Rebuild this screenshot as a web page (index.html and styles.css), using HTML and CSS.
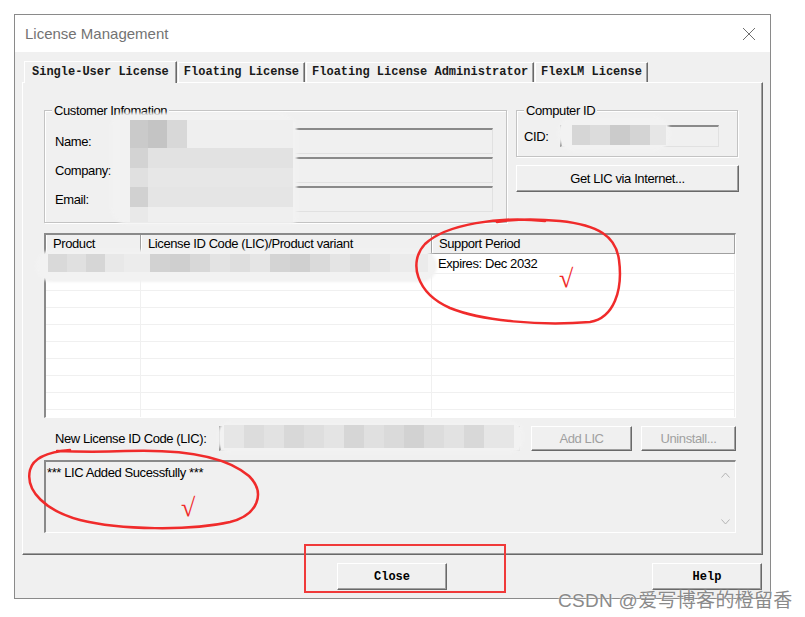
FILE: index.html
```html
<!DOCTYPE html>
<html>
<head>
    <meta charset="UTF-8">
    <title>License Management</title>
    <link rel="stylesheet" href="styles.css">
</head>
<body>

    <div class="window">
        <div class="titlebar">
            <span class="title">License Management</span>
            <svg class="close_x" width="14" height="14" viewBox="0 0 14 14">
                <path d="M1 1 L13 13 M13 1 L1 13" stroke="#6f6f6f" stroke-width="1" fill="none"/>
            </svg>
        </div>
        <div class="client">
            <div class="tabs">
                <div class="tab active">Single-User License</div>
                <div class="tab">Floating License</div>
                <div class="tab">Floating License Administrator</div>
                <div class="tab">FlexLM License</div>
            </div>
            <div class="panel">
                <div class="top_row">
                    <div class="group customer">
                        <div class="group_title">Customer Infomation</div>
                        <div class="form_grid">
                            <span>Name:</span><div class="field"></div>
                            <span>Company:</span><div class="field"></div>
                            <span>Email:</span><div class="field"></div>
                        </div>
                    </div>
                    <div class="side">
                        <div class="group computer">
                            <div class="group_title">Computer ID</div>
                            <div class="cid_row">
                                <span>CID:</span><div class="field cid"></div>
                            </div>
                        </div>
                        <button class="btn wide">Get LIC via Internet...</button>
                    </div>
                </div>

                <div class="listview">
                    <div class="lv_head">
                        <div>Product</div>
                        <div>License ID Code (LIC)/Product variant</div>
                        <div>Support Period</div>
                    </div>
                    <div class="lv_body">
                        <div></div><div></div><div>Expires: Dec 2032</div>
                        <div></div><div></div><div></div>
                        <div></div><div></div><div></div>
                        <div></div><div></div><div></div>
                        <div></div><div></div><div></div>
                        <div></div><div></div><div></div>
                        <div></div><div></div><div></div>
                        <div></div><div></div><div></div>
                        <div></div><div></div><div></div>
                        <div></div><div></div><div></div>
                    </div>
                </div>

                <div class="new_row">
                    <span class="new_label">New License ID Code (LIC):</span>
                    <div class="field lic"></div>
                    <button class="btn disabled add">Add LIC</button>
                    <button class="btn disabled uninstall">Uninstall...</button>
                </div>

                <div class="status">
                    <div class="status_text">*** LIC Added Sucessfully ***</div>
                    <div class="scroll">
                        <svg width="9" height="6" viewBox="0 0 9 6"><path d="M0.5 5.5 L4.5 1 L8.5 5.5" stroke="#b4b4b4" fill="none"/></svg>
                        <svg width="9" height="6" viewBox="0 0 9 6"><path d="M0.5 0.5 L4.5 5 L8.5 0.5" stroke="#b4b4b4" fill="none"/></svg>
                    </div>
                </div>
            </div>
            <div class="footer">
                <button class="btn mono close">Close</button>
                <button class="btn mono help">Help</button>
            </div>
        </div>
    </div>

    <!-- pixelated blur over private data -->
    <div class="mosaic m_customer">
        <div class="mr r1"></div>
        <div class="mr r2"></div>
        <div class="mr r3"></div>
        <div class="mr r4"></div>
        <div class="mr r5"></div>
    </div>
    <div class="mosaic m_cid"><div class="mr"></div></div>
    <div class="mosaic m_row"><div class="mr"></div></div>
    <div class="mosaic m_lic"><div class="mr"></div></div>

    <!-- red annotations -->
    <svg class="marks" width="805" height="617" viewBox="0 0 805 617">
        <path d="M545 221 C500 216 446 224 425 244 C408 262 416 293 450 308 C482 321 540 326 590 322 C614 318 623 290 619 260 C616 236 598 225 560 221 C540 219 515 219 497 222" stroke="#f02b2b" stroke-width="2.5" fill="none" stroke-linecap="round"/>
        <path d="M57 451 C80 452 105 452 125 451 C180 449 226 456 249 476 C266 493 258 515 230 522 C190 531 120 530 80 520 C46 511 25 491 30 470 C33 458 46 452 70 450" stroke="#f02b2b" stroke-width="2.5" fill="none" stroke-linecap="round"/>
        <text x="559" y="287" class="tick">√</text>
        <text x="181" y="516" class="tick">√</text>
        <rect x="305" y="545" width="200" height="47" stroke="#f03a3a" stroke-width="2" fill="none"/>
    </svg>

    <div class="watermark">CSDN @爱写博客的橙留香</div>

</body>
</html>
```

FILE: styles.css
```css
body{
    margin:0;
    padding:14px 0 0 14px;
    background:#fff;
    font-family:"Liberation Sans", Arial, sans-serif;
    font-size:13px;
    letter-spacing:-0.4px;
    color:#000;
}
.window{
    width:755px;
    height:583px;
    border:1px solid #8a8a8a;
    background:#f0f0f0;
}
.titlebar{
    height:37px;
    background:#fff;
    display:flex;
    align-items:center;
    justify-content:space-between;
    padding:0 14px 0 10px;
}
.title{
    font-size:15px;
    letter-spacing:0;
    color:#737373;
}
.client{
    padding:8px 0 0 7px;
}

/* tabs */
.tabs{
    display:flex;
    align-items:flex-end;
    height:22px;
    padding-left:2px;
    font:bold 12px "Liberation Mono", monospace;
    letter-spacing:0;
    color:#1a1a1a;
}
.tab{
    height:19px;
    line-height:19px;
    padding:0 5px;
    margin-left:1px;
    border-top:1px solid #fff;
    border-left:1px solid #fff;
    border-right:1px solid #696969;
    box-shadow:inset -1px 0 #a0a0a0;
    white-space:nowrap;
}
.tab.active{
    height:21px;
    line-height:21px;
    padding:0 7px;
    margin:0 0 -1px 0;
    position:relative;
    background:#f0f0f0;
}
.panel{
    width:718px;
    height:444px;
    padding:27px 0 0 21px;
    border-top:1px solid #fff;
    border-left:1px solid #fff;
    border-right:1px solid #696969;
    border-bottom:1px solid #696969;
    box-shadow:inset -1px -1px #a0a0a0;
}

/* group boxes */
.top_row{
    display:flex;
    align-items:flex-start;
}
.group{
    border:1px solid #c3c3c3;
    box-shadow:inset 1px 1px #fff, 1px 1px #fff;
}
.group_title{
    width:fit-content;
    margin:-8px 0 0 7px;
    padding:0 2px;
    line-height:15px;
    background:#f0f0f0;
}
.customer{
    width:461px;
    padding-bottom:10px;
}
.form_grid{
    display:grid;
    grid-template-columns:65px 373px;
    grid-auto-rows:26px;
    row-gap:3px;
    align-items:center;
    margin:10px 0 0 10px;
}
.field{
    box-sizing:border-box;
    height:26px;
    border-style:solid;
    border-width:2px 1px 1px 2px;
    border-color:#8a8a8a #e1e1e1 #e1e1e1 #8a8a8a;
    background:#f0f0f0;
}
.side{
    width:223px;
    margin-left:9px;
}
.computer{
    width:220px;
    padding-bottom:9px;
}
.cid_row{
    display:grid;
    grid-template-columns:36px 159px;
    align-items:center;
    margin:7px 0 0 7px;
}
.field.cid{
    height:22px;
}

/* buttons */
.btn{
    display:block;
    box-sizing:border-box;
    height:27px;
    padding:0;
    background:#f0f0f0;
    border:1px solid;
    border-color:#fff #696969 #696969 #fff;
    box-shadow:inset -1px -1px #a0a0a0;
    font:inherit;
    letter-spacing:inherit;
    color:#000;
}
.btn.wide{
    width:223px;
    margin-top:8px;
}
.btn.disabled{
    height:25px;
    color:#a0a0a0;
}
.btn.mono{
    font:bold 12px "Liberation Mono", monospace;
    letter-spacing:0;
    width:110px;
}

/* list view */
.listview{
    box-sizing:border-box;
    width:692px;
    height:185px;
    margin-top:10px;
    border-style:solid;
    border-width:2px 1px 1px 2px;
    border-color:#8a8a8a #fff #fff #8a8a8a;
    background:#fff;
    overflow:hidden;
}
.lv_head{
    display:grid;
    grid-template-columns:95px 291px 1fr;
    height:18px;
    line-height:18px;
    border-bottom:1px solid #a0a0a0;
    background:#f0f0f0;
}
.lv_head div{
    padding-left:7px;
    border-right:1px solid #a0a0a0;
    box-shadow:inset 1px 0 #fff;
}
.lv_body{
    display:grid;
    grid-template-columns:95px 291px 1fr;
    grid-template-rows:20px;
    grid-auto-rows:17px;
    height:163px;
    overflow:hidden;
}
.lv_body div{
    border-right:1px solid #f0f0f0;
    border-bottom:1px solid #f0f0f0;
    padding-left:6px;
    line-height:20px;
}

/* new LIC row */
.new_row{
    display:flex;
    align-items:center;
    height:25px;
    margin-top:8px;
}
.new_label{
    width:164px;
    margin-left:11px;
}
.field.lic{
    width:301px;
    height:25px;
}
.btn.add{
    width:101px;
    margin-left:11px;
}
.btn.uninstall{
    width:95px;
    margin-left:9px;
}

/* status box */
.status{
    box-sizing:border-box;
    display:flex;
    width:692px;
    height:73px;
    margin-top:9px;
    border-style:solid;
    border-width:2px 1px 1px 2px;
    border-color:#8a8a8a #fff #fff #8a8a8a;
    background:#f0f0f0;
}
.status_text{
    flex:1;
    padding:3px 0 0 1px;
}
.scroll{
    width:20px;
    display:flex;
    flex-direction:column;
    justify-content:space-between;
    align-items:center;
    padding:10px 0 7px;
}

/* footer */
.footer{
    display:flex;
    margin-top:8px;
}
.btn.close{
    margin-left:315px;
}
.btn.help{
    margin-left:205px;
}

/* mosaics */
.mosaic{
    position:absolute;
    background:#f2f2f2;
    border-radius:12px;
    box-shadow:0 0 3px 2px #f2f2f2;
    filter:blur(0.5px);
}
.m_customer{
    left:113px;
    top:115px;
    width:182px;
    height:107px;
    padding-top:5px;
    box-sizing:border-box;
    border-radius:10px 16px 4px 14px;
}
.m_customer .mr{
    margin-left:17px;
    width:163px;
}
.m_customer .r1{
    height:28px;
    background:linear-gradient(90deg,#cacaca 0 18px,#c4c4c4 18px 37px,#d8d8d8 37px 57px,#efefef 57px);
}
.m_customer .r2{
    height:20px;
    background:linear-gradient(90deg,#d3d3d3 0 18px,#e2e2e2 18px);
}
.m_customer .r3{
    height:19px;
    background:linear-gradient(90deg,#e0e0e0 0 18px,#e7e7e7 18px);
}
.m_customer .r4{
    height:20px;
    background:linear-gradient(90deg,#d1d1d1 0 18px,#e5e5e5 18px);
}
.m_customer .r5{
    height:15px;
    background:linear-gradient(90deg,#e9e9e9 0 18px,#efefef 18px);
}
.m_cid{
    left:560px;
    top:118px;
    width:108px;
    height:31px;
    padding:7px 0 0 12px;
    box-sizing:border-box;
    border-radius:14px;
}
.m_cid .mr{
    height:20px;
    width:94px;
    background:linear-gradient(90deg,#d6d6d6 0 18px,#dcdcdc 18px 38px,#cbcbcb 38px 58px,#d4d4d4 58px 78px,#e6e6e6 78px);
}
.m_row{
    left:38px;
    top:252px;
    width:397px;
    height:28px;
    padding:2px 0 0 10px;
    box-sizing:border-box;
    border-radius:14px;
}
.m_row .mr{
    height:18px;
    width:380px;
    background:linear-gradient(90deg,#d9d9d9 0 19px,#e0e0e0 19px 38px,#d6d6d6 38px 57px,#e8e8e8 57px 76px,#ececec 76px 102px,#d2d2d2 102px 122px,#cfcfcf 122px 142px,#d8d8d8 142px 162px,#e3e3e3 162px 182px,#dedede 182px 202px,#e5e5e5 202px 222px,#d4d4d4 222px 242px,#d0d0d0 242px 262px,#dadada 262px 282px,#e4e4e4 282px 302px,#dcdcdc 302px 322px,#e6e6e6 322px 342px,#ebebeb 342px);
}
.m_lic{
    left:220px;
    top:423px;
    width:301px;
    height:28px;
    padding:2px 0 0 4px;
    box-sizing:border-box;
    border-radius:10px;
}
.m_lic .mr{
    height:23px;
    width:290px;
    background:linear-gradient(90deg,#e6e6e6 0 20px,#dcdcdc 20px 40px,#e2e2e2 40px 60px,#d8d8d8 60px 80px,#dedede 80px 100px,#e4e4e4 100px 120px,#d6d6d6 120px 140px,#e0e0e0 140px 160px,#dadada 160px 180px,#d2d2d2 180px 200px,#dcdcdc 200px 220px,#e2e2e2 220px 240px,#d8d8d8 240px 260px,#e6e6e6 260px);
}

/* annotations */
.marks{
    position:absolute;
    left:0;
    top:0;
    pointer-events:none;
}
.tick{
    font-family:"Liberation Serif", serif;
    font-size:26px;
    fill:#f02b2b;
}
.watermark{
    position:absolute;
    left:558px;
    top:585px;
    font-family:"Liberation Sans", "Noto Sans CJK SC", sans-serif;
    font-size:19px;
    letter-spacing:0.3px;
    color:#8a8a8a;
    text-shadow:0 0 2px #fff;
}
```
